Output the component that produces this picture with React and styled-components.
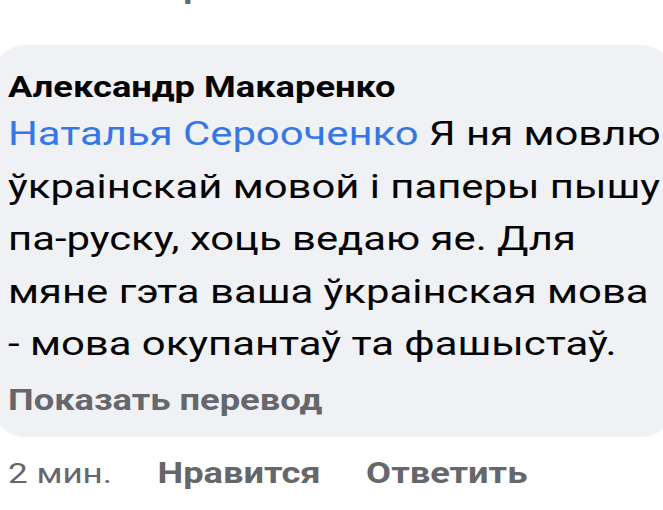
import React from "react";
import styled, { createGlobalStyle } from "styled-components";

// the screenshot is stretched sideways, so the whole sheet is drawn narrow and widened
const STRETCH = 1.23;

const GlobalStyle = createGlobalStyle`
  html, body {
    margin: 0;
    padding: 0;
    background: #ffffff;
    overflow: hidden;
  }
  body {
    font-family: Roboto, "Noto Sans", sans-serif;
    -webkit-font-smoothing: antialiased;
  }
`;

const Viewport = styled.div`
  width: 663px;
  height: 510px;
  overflow: hidden;
`;

const Sheet = styled.div`
  width: ${Math.round(663 / STRETCH)}px;
  transform: scaleX(${STRETCH});
  transform-origin: 0 0;
`;

const Actions = styled.div`
  display: flex;
  align-items: baseline;
  gap: 37px;
  padding-left: 6.5px;
  height: 38px;
  line-height: 38px;
  font-size: 29.5px;
  color: #65676b;
  white-space: nowrap;
  margin-top: ${p => p.$offset || 0}px;
`;

const Time = styled.span`
  font-size: 28.5px;
  font-weight: 400;
`;

const Action = styled.span`
  font-weight: 700;
`;

const Bubble = styled.div`
  margin-top: ${p => p.$top}px;
  margin-left: -3px;
  width: 548px;
  box-sizing: border-box;
  padding: 23px 0 18px 9.5px;
  background: #f0f1f5;
  border-radius: 24px;
`;

const Author = styled.div`
  font-size: 29.5px;
  font-weight: 700;
  line-height: 38px;
  color: #050505;
  white-space: nowrap;
`;

const Body = styled.div`
  margin-top: 1px;
  font-size: 34px;
  line-height: 52.5px;
  color: #050505;
  white-space: nowrap;
`;

const Mention = styled.span`
  color: #3578e5;
`;

const Translate = styled.div`
  margin-top: 11px;
  font-size: 29.5px;
  font-weight: 700;
  line-height: 38px;
  color: #65676b;
`;

const lines = [
  "ўкраінскай мовой і паперы пышу",
  "па-руску, хоць ведаю яе. Для",
  "мяне гэта ваша ўкраінская мова",
  "- мова окупантаў та фашыстаў.",
];

function CommentActions({ offset }) {
  return (
    <Actions $offset={offset}>
      <Time>2 мин.</Time>
      <Action>Нравится</Action>
      <Action>Ответить</Action>
    </Actions>
  );
}

export default function App() {
  return (
    <Viewport>
      <GlobalStyle />
      <Sheet>
        <CommentActions offset={-31} />
        <Bubble $top={38}>
          <Author>Александр Макаренко</Author>
          <Body>
            <Mention>Наталья Серооченко</Mention> Я ня мовлю
            {lines.map(l => (
              <React.Fragment key={l}>
                <br />
                {l}
              </React.Fragment>
            ))}
          </Body>
          <Translate>Показать перевод</Translate>
        </Bubble>
        <CommentActions offset={17} />
      </Sheet>
    </Viewport>
  );
}
